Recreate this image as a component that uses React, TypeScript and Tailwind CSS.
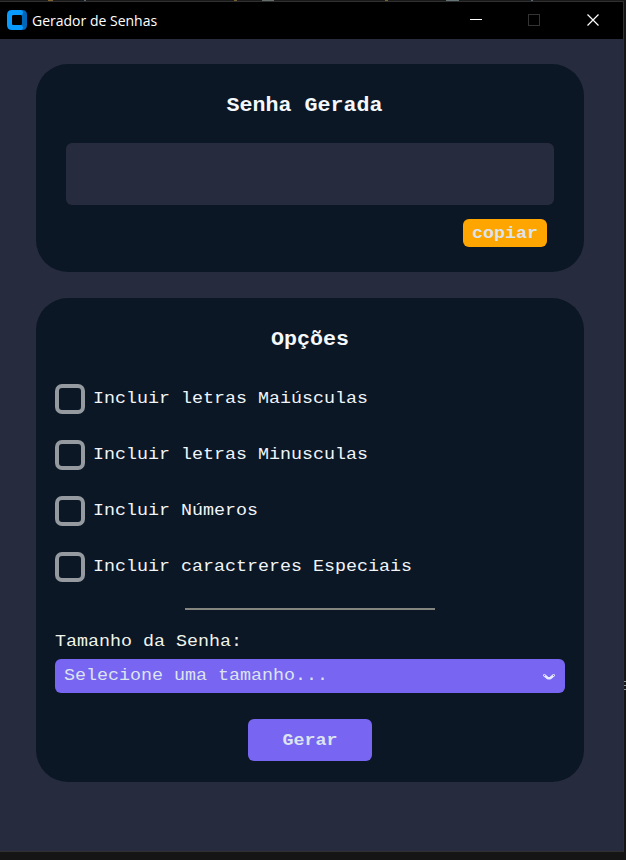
import React from "react";

const options = [
  "Incluir letras Maiúsculas",
  "Incluir letras Minusculas",
  "Incluir Números",
  "Incluir caractreres Especiais",
];

function TitleBar() {
  return (
    <header className="flex h-[37px] shrink-0 items-center bg-black pl-[7px] text-white">
      <svg width="20" height="20" viewBox="0 0 20 20" className="-mt-[2px] shrink-0">
        <path d="M14 0h1q5 0 5 5v10q0 5-5 5h-1z" fill="#0067b8" />
        <path d="M5 0h9q2 0 2 2.500T14 5H7q-2 0-2 2v6q0 2 2 2h7q2 0 2 2.500T14 20H5q-5 0-5-5V5q0-5 5-5z" fill="#0a9bff" />
        <rect x="5" y="5" width="10" height="10" rx="1.500" fill="#000" />
      </svg>
      <span className="ml-[5px] w-[128px] whitespace-nowrap font-['Open_Sans',sans-serif] text-[14px] leading-[20px]">
        Gerador de Senhas
      </span>
      <div className="-mt-px ml-auto flex items-center pr-[24px]">
        <svg width="12" height="12" shapeRendering="crispEdges">
          <rect y="5" width="12" height="1" fill="#fff" />
        </svg>
        <svg width="12" height="12" shapeRendering="crispEdges" className="ml-[46px] mr-[47px]">
          <rect x=".5" y=".5" width="11" height="11" fill="none" stroke="#333" />
        </svg>
        <svg width="12" height="12">
          <path d="M.5 .5l11 11M11.500 .5l-11 11" stroke="#fff" strokeWidth="1.200" />
        </svg>
      </div>
    </header>
  );
}

function EditorStrip() {
  return (
    <div className="flex h-px shrink-0 bg-[#191919]">
      <span className="ml-[48px] w-[5px] bg-[#80642c]" />
      <span className="ml-[31px] w-[2px] bg-[#506b80]" />
      <span className="ml-[148px] w-[3px] bg-[#766036]" />
      <span className="ml-[25px] w-[12px] bg-[#626d6c]" />
      <span className="ml-[111px] w-[3px] bg-[#80642c]" />
      <span className="ml-[58px] w-[13px] bg-[#657577]" />
      <span className="ml-[72px] w-[2px] bg-[#506b80]" />
    </div>
  );
}

/* Slightly flattened type, anchored at the baseline. */
function Type({ children }: { children: React.ReactNode }) {
  return <span className="inline-block origin-[50%_68%] scale-y-[0.9] whitespace-pre">{children}</span>;
}

export default function App() {
  return (
    <div className="flex h-[860px] w-[626px] flex-col overflow-hidden bg-[#151515] font-['Liberation_Mono','Courier_New',monospace]">
      <EditorStrip />
      <div className="flex h-[851px] shrink-0">
        <div className="flex w-[624px] shrink-0 flex-col border-y border-r border-[#303030] bg-[#262b3e]">
          <TitleBar />
          <main className="flex flex-col gap-[26px] px-[36px] pt-[25px]">
            <section className="flex h-[208px] w-[548px] flex-col rounded-[32px] bg-[#0b1724] px-[30px] pt-[29px]">
              <h1 className="mr-[11px] h-[26px] text-center text-[21.67px] font-bold leading-[26px] text-[#f5f8fc]">
                <Type>Senha Gerada</Type>
              </h1>
              <div className="mt-[24px] h-[62px] shrink-0 rounded-[6px] bg-[#262b3e]" />
              <button className="mr-[7px] mt-[14px] h-[28px] w-[84px] self-end rounded-[6px] bg-[#ffa500] pt-[2px] text-[18.33px] font-bold leading-[26px] text-[#dce4ee]">
                <Type>copiar</Type>
              </button>
            </section>
            <section className="flex h-[484px] w-[548px] flex-col rounded-[32px] bg-[#0b1724] px-[19px] pt-[29px]">
              <h2 className="h-[26px] text-center text-[21.67px] font-bold leading-[26px] text-[#f5f8fc]">
                <Type>Opções</Type>
              </h2>
              <div className="mt-[31px] flex flex-col gap-[26px]">
                {options.map((option) => (
                  <label key={option} className="flex h-[30px] items-center gap-[8px] text-[18.33px] leading-[30px] text-[#f0f5fa]">
                    <span className="size-[30px] shrink-0 rounded-[7px] border-4 border-[#949a9f]" />
                    <Type>{option}</Type>
                  </label>
                ))}
              </div>
              <div className="mt-[26px] h-[2px] w-[250px] shrink-0 self-center bg-[#85857f]" />
              <div className="mt-[19px] h-[26px] text-[18.33px] leading-[26px] text-[#f0f5ec]">
                <Type>Tamanho da Senha:</Type>
              </div>
              <button className="mt-[4px] flex h-[34px] shrink-0 items-center justify-between rounded-[6px] bg-[#7865f2] pl-[9px] pr-[9px] text-[18.33px] leading-[34px] text-[#dce4ee]">
                <Type>Selecione uma tamanho...</Type>
                <svg width="14" height="8" viewBox="0 0 14 8" className="mt-[2px]">
                  <path d="M2.300 2.300L5.300 4.800Q7 5.800 8.700 4.800L11.700 2.300" fill="none" stroke="#e6eaff" strokeWidth="2.600" strokeLinecap="round" strokeLinejoin="round" />
                  <circle cx="2.500" cy="2.400" r=".55" fill="#7865f2" />
                  <circle cx="11.500" cy="2.400" r=".55" fill="#7865f2" />
                </svg>
              </button>
              <button className="mt-[26px] h-[42px] w-[124px] shrink-0 self-center rounded-[6px] bg-[#7865f2] pt-[2px] text-[18.33px] font-bold leading-[40px] text-[#dce4ee]">
                <Type>Gerar</Type>
              </button>
            </section>
          </main>
        </div>
        <svg width="2" height="851" className="shrink-0" shapeRendering="crispEdges">
          <path d="M0 680.500h2M0 684.500h2M0 688.500h2" stroke="#8f999c" />
        </svg>
      </div>
      <div className="h-[8px] shrink-0 bg-[#151515]" />
    </div>
  );
}
